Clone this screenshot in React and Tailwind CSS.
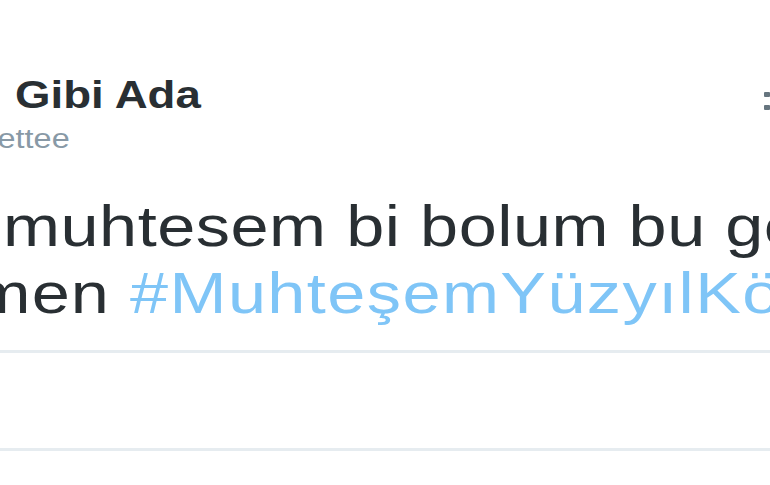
import React from 'react';

function App() {
  return (
    <div
      className="relative w-[770px] h-[485px] overflow-hidden bg-white text-[#292f33]"
      style={{ fontFamily: '"Liberation Sans", Arial, sans-serif' }}
    >
      {/* the screenshot is stretched horizontally, so the whole card is scaled on x */}
      <div className="w-[642px] origin-left scale-x-[1.2]">
        <div className="pl-[12.5px] pt-[76px]">
          <div className="h-[38px] text-[38px] leading-[38px] font-bold whitespace-nowrap">Gibi Ada</div>
        </div>
        <div className="mt-[12px] -ml-[2px] h-[27px] text-[27px] leading-[27px] text-[#8899a6] whitespace-nowrap">
          ettee
        </div>

        <div className="mt-[40px] text-[57px] leading-[67px] whitespace-nowrap">
          <div className="pl-[2.5px] tracking-[0.45px]">muhtesem bi bolum bu gece</div>
          <div className="-ml-[22px] tracking-[0.9px]">
            men <span className="text-[#7fc5f7] tracking-[1.2px]">#MuhteşemYüzyılKösem</span>
          </div>
        </div>

        <div className="mt-[23px] h-[3px] bg-[#e6ecf0]"></div>
        <div className="h-[95px]"></div>
        <div className="h-[3px] bg-[#e6ecf0]"></div>
      </div>

      {/* caret at the right edge, mostly cut off */}
      <div className="absolute left-[764px] top-[92px] flex flex-col gap-[8px]">
        <div className="w-[6px] h-[5px] rounded-[1px] bg-[#66757f]"></div>
        <div className="w-[6px] h-[5px] rounded-[1px] bg-[#66757f]"></div>
      </div>
    </div>
  );
}

export default App;
